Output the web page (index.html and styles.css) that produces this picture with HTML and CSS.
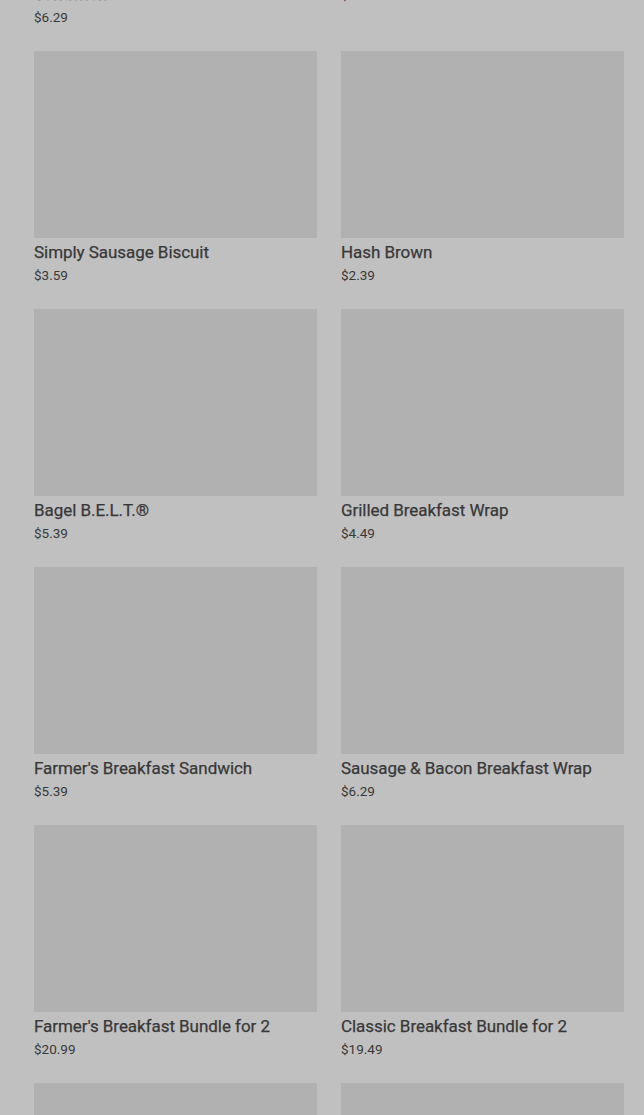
FILE: index.html
```html
<!DOCTYPE html>
<html lang="en">
<head>
    <meta charset="UTF-8">
    <meta name="viewport" content="width=device-width, initial-scale=1.0">
    <title>Breakfast Menu</title>
    <link rel="stylesheet" href="styles.css">
</head>
<body>
    <div class="menu-grid">
        <div class="item">
            <div class="item-image"></div>
            <div class="item-name">Sausage, Egg &amp; Cheese Biscuit Sandwich</div>
            <div class="item-price">$6.29</div>
        </div>
        <div class="item">
            <div class="item-image"></div>
            <div class="item-name">Small Coffee</div>
            <div class="item-price">$1.49</div>
        </div>

        <div class="item">
            <div class="item-image"></div>
            <div class="item-name">Simply Sausage Biscuit</div>
            <div class="item-price">$3.59</div>
        </div>
        <div class="item">
            <div class="item-image"></div>
            <div class="item-name">Hash Brown</div>
            <div class="item-price">$2.39</div>
        </div>

        <div class="item">
            <div class="item-image"></div>
            <div class="item-name">Bagel B.E.L.T.®</div>
            <div class="item-price">$5.39</div>
        </div>
        <div class="item">
            <div class="item-image"></div>
            <div class="item-name">Grilled Breakfast Wrap</div>
            <div class="item-price">$4.49</div>
        </div>

        <div class="item">
            <div class="item-image"></div>
            <div class="item-name">Farmer's Breakfast Sandwich</div>
            <div class="item-price">$5.39</div>
        </div>
        <div class="item">
            <div class="item-image"></div>
            <div class="item-name">Sausage &amp; Bacon Breakfast Wrap</div>
            <div class="item-price">$6.29</div>
        </div>

        <div class="item">
            <div class="item-image"></div>
            <div class="item-name">Farmer's Breakfast Bundle for 2</div>
            <div class="item-price">$20.99</div>
        </div>
        <div class="item">
            <div class="item-image"></div>
            <div class="item-name">Classic Breakfast Bundle for 2</div>
            <div class="item-price">$19.49</div>
        </div>

        <div class="item">
            <div class="item-image"></div>
            <div class="item-name">Breakfast Bundle</div>
            <div class="item-price">$9.99</div>
        </div>
        <div class="item">
            <div class="item-image"></div>
            <div class="item-name">Coffee Bundle</div>
            <div class="item-price">$7.99</div>
        </div>
    </div>
</body>
</html>
```

FILE: styles.css
```css
:root {
    --page-bg: #c0c0c0;
    --image-bg: #b1b1b1;
    --text-color: #383838;
}

body, html {
    margin: 0;
    padding: 0;
    font-family: Roboto, 'Liberation Sans', sans-serif;
    background-color: var(--page-bg);
    color: var(--text-color);
    height: 100%;
    overflow: hidden;
}

/* la página está desplazada: la primera fila queda casi fuera */
.menu-grid {
    display: grid;
    grid-template-columns: 283px 283px;
    align-items: start;
    column-gap: 24px;
    row-gap: 24px;
    padding: 0 20px 0 34px;
    margin-top: -229px;
}

.item-image {
    height: 187px;
    background-color: var(--image-bg);
}

.item-name {
    margin-top: 3px;
    font-size: 17px;
    font-weight: 400;
    letter-spacing: -0.05px;
    line-height: 22px;
    -webkit-text-stroke: 0.25px var(--text-color);
}

.item-price {
    margin-top: 2px;
    font-size: 13.5px;
    line-height: 20px;
}
```
